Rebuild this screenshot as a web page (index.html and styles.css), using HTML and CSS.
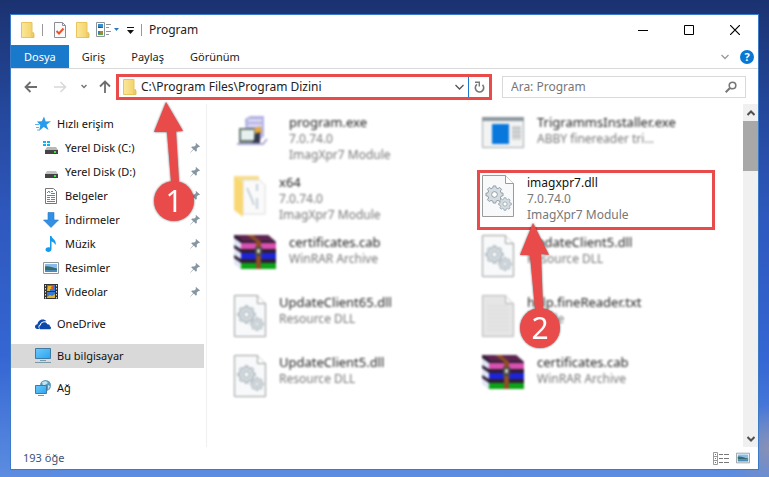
FILE: index.html
```html
<!DOCTYPE html>
<html lang="tr">
  <head>
    <meta charset="UTF-8">
    <meta name="viewport" content="width=device-width, initial-scale=1.0">
    <title>Program</title>
    <link rel="stylesheet" href="styles.css">
  </head>
  <body>
    <!-- shared icons -->
    <svg class="sprite" aria-hidden="true">
      <defs>
        <linearGradient id="gold" x1="0" x2="1"><stop offset="0" stop-color="#fbe79b"/><stop offset="1" stop-color="#f3cf62"/></linearGradient>
        <linearGradient id="screen" x1="0" y1="0" x2="1" y2="1"><stop offset="0" stop-color="#6cc9fd"/><stop offset="1" stop-color="#2ba4f0"/></linearGradient>
      </defs>
      <symbol id="folder" viewBox="0 0 14 16">
        <path d="M.5.5h10.5v10.5l2 .5v4H.5z" fill="url(#gold)" stroke="#e8c55c"/>
        <path d="M11 11l1.500-.5v4.500H11z" fill="#f5d77c" stroke="#dfb84e" stroke-width=".6"/>
      </symbol>
      <symbol id="pin" viewBox="0 0 10 10">
        <path d="M6 0l4 3.600-1 .6-.7-.1-1.600 1.700.2 2-1 .9-2.100-2.100L.6 9.600 0 10l.4-.8 2.800-3L1.200 4.300l.9-.9 2.200.2L6 1.900 5.600.8z" fill="#8795a1"/>
      </symbol>
      <symbol id="gear" viewBox="-10 -10 20 20">
        <g fill="#d5dde2" stroke="#8d9aa2" stroke-width="1">
          <path d="M-1.300-9h2.600l.5 2.100 1.900.7 1.800-1.200 1.900 1.900-1.200 1.800.7 1.900 2.100.5v2.600l-2.100.5-.7 1.900 1.200 1.800-1.900 1.900-1.800-1.200-1.900.7L1.300 9h-2.600l-.5-2.100-1.900-.7-1.800 1.200-1.900-1.900 1.200-1.800-.7-1.900-2.100-.5v-2.600l2.100-.5.7-1.900-1.200-1.800 1.900-1.900 1.800 1.200 1.900-.7z"/>
          <circle r="3" fill="#fff"/>
        </g>
      </symbol>
      <symbol id="dll" viewBox="0 0 34 44">
        <path d="M1.500 1.500h23l8 8v33h-31z" fill="#f8f9fa" stroke="#9b9b9b"/>
        <path d="M24.500 1.500v8h8" fill="#fff" stroke="#9b9b9b"/>
        <use href="#gear" x="4" y="11" width="19" height="19"/>
        <use href="#gear" x="17" y="23" width="14" height="14"/>
      </symbol>
      <symbol id="txt" viewBox="0 0 34 44">
        <path d="M1.500 1.500h23l8 8v33h-31z" fill="#e6e6e6" stroke="#b5b5b5"/>
        <path d="M24.500 1.500v8h8" fill="#f6f6f6" stroke="#b5b5b5"/>
        <path d="M6 12h21M6 16h22M6 20h22M6 24h22M6 28h22M6 32h22M6 36h22" stroke="#d8d8d8"/>
      </symbol>
      <symbol id="rar" viewBox="0 0 44 38">
        <path d="M1 1h34l8 7v27H8L1 28z" fill="#2f1d35"/>
        <path d="M1 4l7 5v6L1 11zM1 14l7 5v6l-7-4zM1 24l7 5v6l-7-5z" fill="#dfe6f5"/>
        <path d="M3 1h32l7 6H10z" fill="#5e2450"/>
        <path d="M8 9h35v6H8z" fill="#d850b0"/>
        <path d="M8 19h35v6H8z" fill="#1d24d8"/>
        <path d="M8 29h35v6H8z" fill="#0ca316"/>
        <path d="M14 1h6l8 7v27h-5V8z" fill="#8d4f24"/>
        <path d="M22 13h7v9h-7z" fill="#4a4a4a"/><path d="M24 15h3v4h-3z" fill="#d0d0c0"/>
      </symbol>
      <symbol id="setup" viewBox="0 0 44 38">
        <path d="M12 5l5-3h14v20l-4 4H13z" fill="#b4b2e2"/>
        <path d="M15 5h14v3H15zM15 10h14v3H15z" fill="#d8d7f2"/>
        <path d="M6 14h17v15H6z" fill="#6d7b75"/><path d="M8 16h13v10H8z" fill="#e6f1ef"/>
        <path d="M21 15l6-3 2 6-5 4z" fill="#e8a83a"/>
        <path d="M22 20l5-2v11h-8l2-3z" fill="#34394f"/>
        <path d="M4 30h26l4-5" fill="none" stroke="#aaa9d6" stroke-width="2"/>
      </symbol>
      <symbol id="folder-open" viewBox="0 0 34 44">
        <path d="M1 2h25v34H9z" fill="#f8dd88"/>
        <path d="M10 6h17l5 5v29H10z" fill="#fafafa" stroke="#dcdcdc"/>
        <path d="M14 14l4 9 3 8M24 10v7M24 24v11" fill="none" stroke="#b4c2d2" stroke-width="1.500"/>
        <path d="M1 2l9 7v34L1 36z" fill="#f9d873"/>
      </symbol>
      <symbol id="app" viewBox="0 0 44 38">
        <path d="M1.500 3.500h41v30h-41z" fill="#f3f3f3" stroke="#9faab0"/>
        <path d="M1 3h42v4H1z" fill="#8c989f"/>
        <path d="M11 10h17v20H11z" fill="#0878dc"/>
        <path d="M31 12h9v14h-9z" fill="#d5d7d8"/><path d="M31 14h9M31 18h9M31 22h9" stroke="#b4b8ba"/>
      </symbol>
      <symbol id="picture" viewBox="0 0 16 12">
        <path d="M.5.5h15v11H.5z" fill="#fff" stroke="#8f989d"/>
        <path d="M2 2h12v5H2z" fill="#8bbbe8"/><path d="M2 4.500c3-1 7 1 12 2V8H2z" fill="#356d68"/><path d="M2 8h12v2H2z" fill="#4d8abc"/>
      </symbol>
    </svg>

    <main class="window">
      <header class="titlebar">
        <div class="quick">
          <svg width="14" height="16"><use href="#folder"/></svg>
          <span class="sep"></span>
          <button class="icon-button check" aria-label="Özellikler">
            <svg width="12" height="16" viewBox="0 0 12 16"><path d="M.5.500h8l3 3v12H.5z" fill="#f8fafc" stroke="#8b8f94"/><path d="M8.500.5v3h3" fill="none" stroke="#8b8f94"/><path d="M2.500 9l2.500 2.500 4.500-5" fill="none" stroke="#ef5128" stroke-width="2"/></svg>
          </button>
          <button class="icon-button new-folder" aria-label="Yeni klasör"><svg width="14" height="16"><use href="#folder"/></svg></button>
          <button class="icon-button" aria-label="Görünüm seçenekleri">
            <svg width="23" height="16" viewBox="0 0 23 16"><path d="M.5.500h8v14h-8z" fill="#fff" stroke="#8c949a"/><path d="M2 2h5v4H2z" fill="#3c8bcc"/><path d="M2 4.500l5 1V6H2z" fill="#245b50"/><path d="M2 9h5v4H2z" fill="#59a650"/><path d="M2 9h2v3H2z" fill="#3d79d0"/><circle cx="5.500" cy="11" r="1.200" fill="#e76b27"/><path d="M10 2.500h5M10 5.500h3M10 9.500h5M10 12.500h3" stroke="#8c949a"/><path d="M18 6h5l-2.500 3z" fill="#3575bb"/></svg>
          </button>
          <button class="icon-button more" aria-label="Özelleştir">
            <svg width="7" height="8" viewBox="0 0 7 8"><path d="M0 .5h7" stroke="#111"/><path d="M0 3h7L3.500 7z" fill="#111"/></svg>
          </button>
          <span class="sep"></span>
        </div>
        <h1 class="title">Program</h1>
        <div class="controls">
          <button aria-label="Küçült"><svg width="10" height="10"><path d="M0 5.500h10" stroke="#000"/></svg></button>
          <button aria-label="Ekranı kapla"><svg width="10" height="10"><path d="M.5.500h9v9h-9z" fill="none" stroke="#000"/></svg></button>
          <button aria-label="Kapat"><svg width="10" height="10"><path d="M0 0l10 10M10 0L0 10" stroke="#000" stroke-width="1.200"/></svg></button>
        </div>
      </header>

      <nav class="ribbon" aria-label="Menü">
        <button class="tab active">Dosya</button>
        <button class="tab">Giriş</button>
        <button class="tab">Paylaş</button>
        <button class="tab">Görünüm</button>
        <button class="icon-button expand" aria-label="Genişlet"><svg width="8" height="6"><path d="M.5 1L4 4.500 7.500 1" fill="none" stroke="#9a9a9a" stroke-width="1.300"/></svg></button>
        <button class="help" aria-label="Yardım">?</button>
      </nav>

      <div class="toolbar">
        <div class="history">
          <button class="icon-button" aria-label="Geri"><svg width="13" height="12" viewBox="0 0 13 12"><path d="M13 6H1.500M6.500 1l-5 5 5 5" fill="none" stroke="#6e6e6e" stroke-width="1.800"/></svg></button>
          <button class="icon-button forward" aria-label="İleri"><svg width="13" height="12" viewBox="0 0 13 12"><path d="M0 6h11.500M6.500 1l5 5-5 5" fill="none" stroke="#d8d8d8" stroke-width="1.500"/></svg></button>
          <button class="icon-button recent" aria-label="Son konumlar"><svg width="6" height="5"><path d="M.5 1L3 3.500 5.500 1" fill="none" stroke="#777" stroke-width="1.500"/></svg></button>
          <button class="icon-button" aria-label="Yukarı"><svg width="12" height="13" viewBox="0 0 12 13"><path d="M6 13V1.500M1 6.500l5-5 5 5" fill="none" stroke="#6e6e6e" stroke-width="1.800"/></svg></button>
        </div>
        <div class="address">
          <svg width="14" height="16"><use href="#folder"/></svg>
          <input class="path" type="text" aria-label="Adres" value="C:\Program Files\Program Dizini">
          <button class="icon-button drop" aria-label="Önceki konumlar"><svg width="9" height="6"><path d="M.5 1l4 4 4-4" fill="none" stroke="#555" stroke-width="1.300"/></svg></button>
          <button class="icon-button refresh" aria-label="Yenile"><svg width="11" height="12" viewBox="0 0 11 12"><path d="M8.500 3.800A4.200 4.200 0 1 1 3 3.400" fill="none" stroke="#777" stroke-width="1.600"/><path d="M1 1.200h4.300v4.300" fill="none" stroke="#777" stroke-width="1.400"/></svg></button>
          <div class="callout first">
            <svg width="40" height="84" viewBox="0 0 40 84"><path d="M12 1l17 29-7 .5 3 50H17L13 31H0z"/></svg>
            <span class="number">1</span>
          </div>
        </div>
        <div class="search">
          <input type="search" aria-label="Ara" placeholder="Ara: Program">
          <svg width="12" height="12" viewBox="0 0 12 12"><circle cx="7.500" cy="4.500" r="3.300" fill="none" stroke="#777" stroke-width="1.600"/><path d="M5 7L.7 11.300" stroke="#777" stroke-width="2"/></svg>
        </div>
      </div>

      <div class="content">
        <nav class="sidebar" aria-label="Gezinti">
          <ul class="group">
            <li><a href="#" class="place root"><svg width="16" height="16" viewBox="0 0 16 16"><path d="M9 .5l1.700 5 5.300-.2-4.500 3.400 2 5.300-4.800-2.900L4 15l1.300-5.800L2 5.500l4.800-.2z" fill="#2b9ae8"/><path d="M0 8.500h4M1 11.500h3M2 14h2" stroke="#5eb4ef"/></svg>Hızlı erişim</a></li>
            <li><a href="#" class="place"><svg width="16" height="16" viewBox="0 0 16 16"><path d="M0 1h3v2H0zM4 1h3v2H4zM0 4h3v2H0zM4 4h3v2H4z" fill="#10b2f2"/><path d="M4 7h9l2 3H2z" fill="#b8b8b8"/><path d="M2 10h13v4H2z" fill="#444"/><path d="M11 11h2v2h-2z" fill="#38e83e"/></svg>Yerel Disk (C:)<svg class="pin" width="10" height="10"><use href="#pin"/></svg></a></li>
            <li><a href="#" class="place"><svg width="16" height="16" viewBox="0 0 16 16"><path d="M4 7h9l2 3H2z" fill="#c2c2c2"/><path d="M2 10h13v4H2z" fill="#444"/><path d="M11 11h2v2h-2z" fill="#38e83e"/></svg>Yerel Disk (D:)<svg class="pin" width="10" height="10"><use href="#pin"/></svg></a></li>
            <li><a href="#" class="place"><svg width="16" height="16" viewBox="0 0 16 16"><path d="M2.500.500h8l3 3v12h-11z" fill="#fff" stroke="#777"/><path d="M4 5l2-2 1 2M8 3.500h2M8 5.500h4M4 7.500h8M4 9.500h3M8 9.500h4M4 11.500h3M8 11.500h4M4 13.500h8" fill="none" stroke="#3c91c4"/></svg>Belgeler<svg class="pin" width="10" height="10"><use href="#pin"/></svg></a></li>
            <li><a href="#" class="place"><svg width="16" height="16" viewBox="0 0 16 16"><path d="M5 .500h6V8h4.500L8 15.500.5 8H5z" fill="#3290e4" stroke="#2677c6" stroke-width=".6"/></svg>İndirmeler<svg class="pin" width="10" height="10"><use href="#pin"/></svg></a></li>
            <li><a href="#" class="place"><svg width="16" height="16" viewBox="0 0 16 16"><path d="M7 0h1.500c.5 3 5.500 4 4 9-1-2-2-3-4-3.500V13c0 4-6.500 3.500-6 .5.300-2 2.500-2.700 4.500-2z" fill="#159bee"/></svg>Müzik<svg class="pin" width="10" height="10"><use href="#pin"/></svg></a></li>
            <li><a href="#" class="place"><svg width="16" height="12"><use href="#picture"/></svg>Resimler<svg class="pin" width="10" height="10"><use href="#pin"/></svg></a></li>
            <li><a href="#" class="place"><svg width="16" height="16" viewBox="0 0 16 16"><path d="M1 0h14v15H1z" fill="#333"/><path d="M2.500 1v14M13.500 1v14" stroke="#ddd" stroke-dasharray="1.500 1.500"/><path d="M4 1h8v6H4zM4 8h8v6H4z" fill="#3679d8"/><path d="M5 2h5v3H7v2H4zM4 13l3-2 2 1 3-2v4H4z" fill="#e2b42b"/><circle cx="9.500" cy="3.500" r="1.500" fill="#da4c34"/></svg>Videolar<svg class="pin" width="10" height="10"><use href="#pin"/></svg></a></li>
          </ul>
          <ul class="group">
            <li><a href="#" class="place root"><svg width="16" height="16" viewBox="0 0 16 16"><path d="M4.500 13H2.300C.8 13 0 12 0 10.800 0 9.200 1 8.300 2.500 8.200 3 4 8.500 1.500 11.500 5.300 8 4.600 5.200 6.500 4.800 8.800 3 9.500 3 11.800 4.500 13z" fill="#0c48ac"/><path d="M5.800 9.300C6 6 11 5 12.300 8.300c2-.3 2.700 1 2.500 1.900C16.700 10.700 16.200 13.200 14.500 13.200h-9C3.800 13 3.800 9.700 5.800 9.300z" fill="#0c48ac"/></svg>OneDrive</a></li>
          </ul>
          <ul class="group">
            <li><a href="#" class="place root selected" aria-current="page"><svg width="16" height="16" viewBox="0 0 16 16"><path d="M.5.500h15v10H.5z" fill="url(#screen)" stroke="#3f7aa2"/><path d="M5 12.500h6M0 14.500h16" stroke="#7999aa"/></svg>Bu bilgisayar</a></li>
          </ul>
          <ul class="group">
            <li><a href="#" class="place root"><svg width="16" height="16" viewBox="0 0 16 16"><circle cx="10.500" cy="5.500" r="5.500" fill="#5799bc"/><path d="M7 2l4-1 2 2-3 2 1 4-3-3zM13 5l2 1-2 4z" fill="#c4e3ef"/><path d="M.5 5.500h11v8H.5z" fill="url(#screen)" stroke="#3f7aa2"/><path d="M3 15.500h6" stroke="#7999aa"/></svg>Ağ</a></li>
          </ul>
        </nav>

        <section class="files" aria-label="Dosyalar">
          <article class="file faded">
            <svg class="wide"><use href="#setup"/></svg>
            <div><h2>program.exe</h2><p>7.0.74.0</p><p>ImagXpr7 Module</p></div>
          </article>
          <article class="file faded">
            <svg class="wide"><use href="#app"/></svg>
            <div><h2>TrigrammsInstaller.exe</h2><p>ABBY finereader tri...</p></div>
          </article>
          <article class="file faded">
            <svg class="tall"><use href="#folder-open"/></svg>
            <div><h2>x64</h2><p>7.0.74.0</p><p>ImagXpr7 Module</p></div>
          </article>
          <article class="file marked">
            <svg class="tall"><use href="#dll"/></svg>
            <div><h2>imagxpr7.dll</h2><p>7.0.74.0</p><p>ImagXpr7 Module</p></div>
            <div class="callout second">
              <svg width="40" height="90" viewBox="0 0 40 90"><path d="M13 1l16 32-8-1 2 55h-8L10 33H0z"/></svg>
              <span class="number">2</span>
            </div>
          </article>
          <article class="file faded">
            <svg class="wide"><use href="#rar"/></svg>
            <div><h2>certificates.cab</h2><p>WinRAR Archive</p></div>
          </article>
          <article class="file faded">
            <svg class="tall"><use href="#dll"/></svg>
            <div><h2>UpdateClient5.dll</h2><p>Resource DLL</p></div>
          </article>
          <article class="file faded">
            <svg class="tall"><use href="#dll"/></svg>
            <div><h2>UpdateClient65.dll</h2><p>Resource DLL</p></div>
          </article>
          <article class="file faded">
            <svg class="tall"><use href="#txt"/></svg>
            <div><h2>help.fineReader.txt</h2><p>txt File</p></div>
          </article>
          <article class="file faded">
            <svg class="tall"><use href="#dll"/></svg>
            <div><h2>UpdateClient5.dll</h2><p>Resource DLL</p></div>
          </article>
          <article class="file faded">
            <svg class="wide"><use href="#rar"/></svg>
            <div><h2>certificates.cab</h2><p>WinRAR Archive</p></div>
          </article>
        </section>

        <div class="scrollbar">
          <button aria-label="Yukarı kaydır"><svg width="8" height="6"><path d="M.5 5L4 1.500 7.500 5" fill="none" stroke="#505050" stroke-width="2"/></svg></button>
          <div class="thumb"></div>
          <button class="down" aria-label="Aşağı kaydır"><svg width="8" height="6"><path d="M.5 1L4 4.500 7.500 1" fill="none" stroke="#505050" stroke-width="2"/></svg></button>
        </div>
      </div>

      <footer class="status">
        <span>193 öğe</span>
        <button class="icon-button" aria-label="Ayrıntılar"><svg width="16" height="13" viewBox="0 0 16 13"><path d="M.5.500h4v12h-4zM.5 4.500h4M.5 8.500h4" fill="none" stroke="#999"/><path d="M2 2h1v1H2zM2 6h1v1H2z" fill="#3481c4"/><path d="M2 10h1v1H2z" fill="#d24d38"/><path d="M6 2.500h4M11 2.500h5M6 6.500h4M11 6.500h5M6 10.500h4M11 10.500h5" stroke="#777"/></svg></button>
        <button class="icon-button" aria-label="Büyük simgeler"><svg width="14" height="12"><use href="#picture"/></svg></button>
      </footer>
    </main>
  </body>
</html>
```
FILE: styles.css
```css
:root{
  --red: #e94b4b;
  --blue: #1979ca;
  --line: #d9d9d9;
}
*{
  box-sizing: border-box;
  margin: 0;
  padding: 0;
}
body{
  min-height: 100vh;
  display: flex;
  padding: 14px 10px 7px;
  background: radial-gradient(circle at 100% 94%, #8991b6 0, rgba(137, 145, 182, 0) 44px), linear-gradient(#1b3270 0, #24479a 22%, #2e58bd 45%, #3566d3 75%, #5c8de0 100%);
  font-family: "Noto Sans", "Open Sans", sans-serif;
  font-size: 12px;
  line-height: 16px;
  color: #222;
}
ul{
  list-style: none;
}
button, input{
  font: inherit;
  color: inherit;
  border: none;
  background: none;
}
svg{
  display: block;
  flex: none;
}
.sprite{
  position: absolute;
  width: 0;
  height: 0;
}
.window{
  flex: 1;
  min-width: 0;
  display: flex;
  flex-direction: column;
  background: white;
  border: 1px solid #3c7bc8;
}

/* title bar */
.titlebar{
  display: flex;
  align-items: center;
  height: 30px;
  padding-left: 10px;
}
.quick{
  display: flex;
  align-items: center;
}
.icon-button{
  display: flex;
  align-items: center;
  justify-content: center;
}
.sep{
  width: 1px;
  height: 12px;
  margin: 0 7px;
  background: #999;
}
.check{
  margin: 0 10px 0 4px;
}
.new-folder{
  margin-right: 6px;
}
.more{
  margin: 2px 0 0 8px;
}
.title{
  font-size: 12px;
  font-weight: 400;
}
.controls{
  display: flex;
  margin-left: auto;
}
.controls button{
  display: flex;
  align-items: center;
  justify-content: center;
  width: 46px;
  height: 30px;
}

/* menu tabs */
.ribbon{
  display: flex;
  align-items: center;
  height: 24px;
  border-bottom: 1px solid var(--line);
  padding-right: 4px;
  font-size: 11px;
}
.tab{
  height: 23px;
  padding: 0 13px;
}
.active{
  background: var(--blue);
  color: white;
}
.expand{
  margin: 0 11px 0 auto;
}
.help{
  width: 14px;
  height: 14px;
  border-radius: 50%;
  background: #0878d4;
  color: white;
  font-size: 11px;
  font-weight: 700;
  line-height: 14px;
}

/* address and search */
.toolbar{
  display: flex;
  align-items: center;
  height: 35px;
  padding-right: 12px;
}
.history{
  display: flex;
  align-items: center;
  width: 105px;
  padding-left: 13px;
}
.forward{
  margin: 0 6px 0 17px;
}
.recent{
  margin: 0 12px 0 8px;
}
.address{
  position: relative;
  flex: 1 1 376px;
  min-width: 0;
  display: flex;
  align-items: center;
  height: 26px;
  padding-left: 4px;
  border: 3px solid var(--red);
}
.path{
  flex: 1;
  min-width: 0;
  padding: 0 4px;
}
.drop{
  width: 17px;
}
.refresh{
  width: 21px;
  height: 20px;
  border-left: 1px solid #1979ca;
}
.search{
  flex: 1 1 244px;
  min-width: 0;
  display: flex;
  align-items: center;
  height: 22px;
  margin-left: 10px;
  padding: 0 8px;
  border: 1px solid var(--line);
}
.search input{
  flex: 1;
  min-width: 0;
}
.search input::placeholder{
  color: #777;
}

/* numbered arrows */
.callout{
  position: absolute;
  z-index: 1;
  display: flex;
  flex-direction: column;
  align-items: center;
  filter: drop-shadow(0 0 1px rgba(0, 0, 0, .6));
}
.callout svg{
  fill: var(--red);
}
.number{
  width: 40px;
  height: 40px;
  margin-top: -4px;
  border-radius: 50%;
  background: var(--red);
  color: white;
  font-size: 30px;
  line-height: 40px;
  text-align: center;
}
.first{
  top: 24px;
  left: 35px;
}
.second{
  top: 49px;
  left: 40px;
}

/* folder tree */
.content{
  flex: 1;
  display: flex;
}
.sidebar{
  width: 196px;
  padding: 8px 2px 0 0;
  border-right: 1px solid #f0f0f0;
  font-size: 11px;
}
.group{
  margin-bottom: 8px;
}
.place{
  display: flex;
  align-items: center;
  gap: 6px;
  height: 24px;
  padding: 0 4px 0 32px;
  color: #111;
  text-decoration: none;
}
.root{
  padding-left: 24px;
}
.pin{
  margin-left: auto;
}
.selected{
  background: #d9d9d9;
}

/* file list */
.files{
  flex: 1;
  display: grid;
  grid-template-columns: repeat(2, 1fr);
  grid-auto-rows: 60px;
  align-content: start;
  column-gap: 10px;
  padding: 6px 28px 0 22px;
}
.file{
  position: relative;
  display: flex;
  gap: 12px;
  padding: 4px;
}
.file h2{
  font-size: 12px;
  font-weight: 400;
  line-height: 17px;
}
.file p{
  font-size: 12px;
  line-height: 16px;
  color: #777;
}
.faded{
  filter: blur(1px);
}
.faded h2{
  font-size: 13px;
}
.marked{
  z-index: 1;
  padding: 1px;
  border: 3px solid var(--red);
}
.marked h2{
  color: #111;
}
.tall{
  width: 34px;
  height: 44px;
}
.wide{
  width: 44px;
  height: 38px;
}

/* scroll bar */
.scrollbar{
  display: flex;
  flex-direction: column;
  width: 15px;
  background: #f0f0f0;
}
.scrollbar button{
  display: flex;
  align-items: center;
  justify-content: center;
  height: 17px;
}
.thumb{
  height: 50px;
  background: #a8a8a8;
}
.scrollbar .down{
  margin-top: auto;
}

/* status bar */
.status{
  display: flex;
  align-items: center;
  gap: 7px;
  height: 22px;
  padding: 0 8px 0 12px;
  font-size: 11px;
  color: #3d5277;
}
.status span{
  margin-right: auto;
}
```
